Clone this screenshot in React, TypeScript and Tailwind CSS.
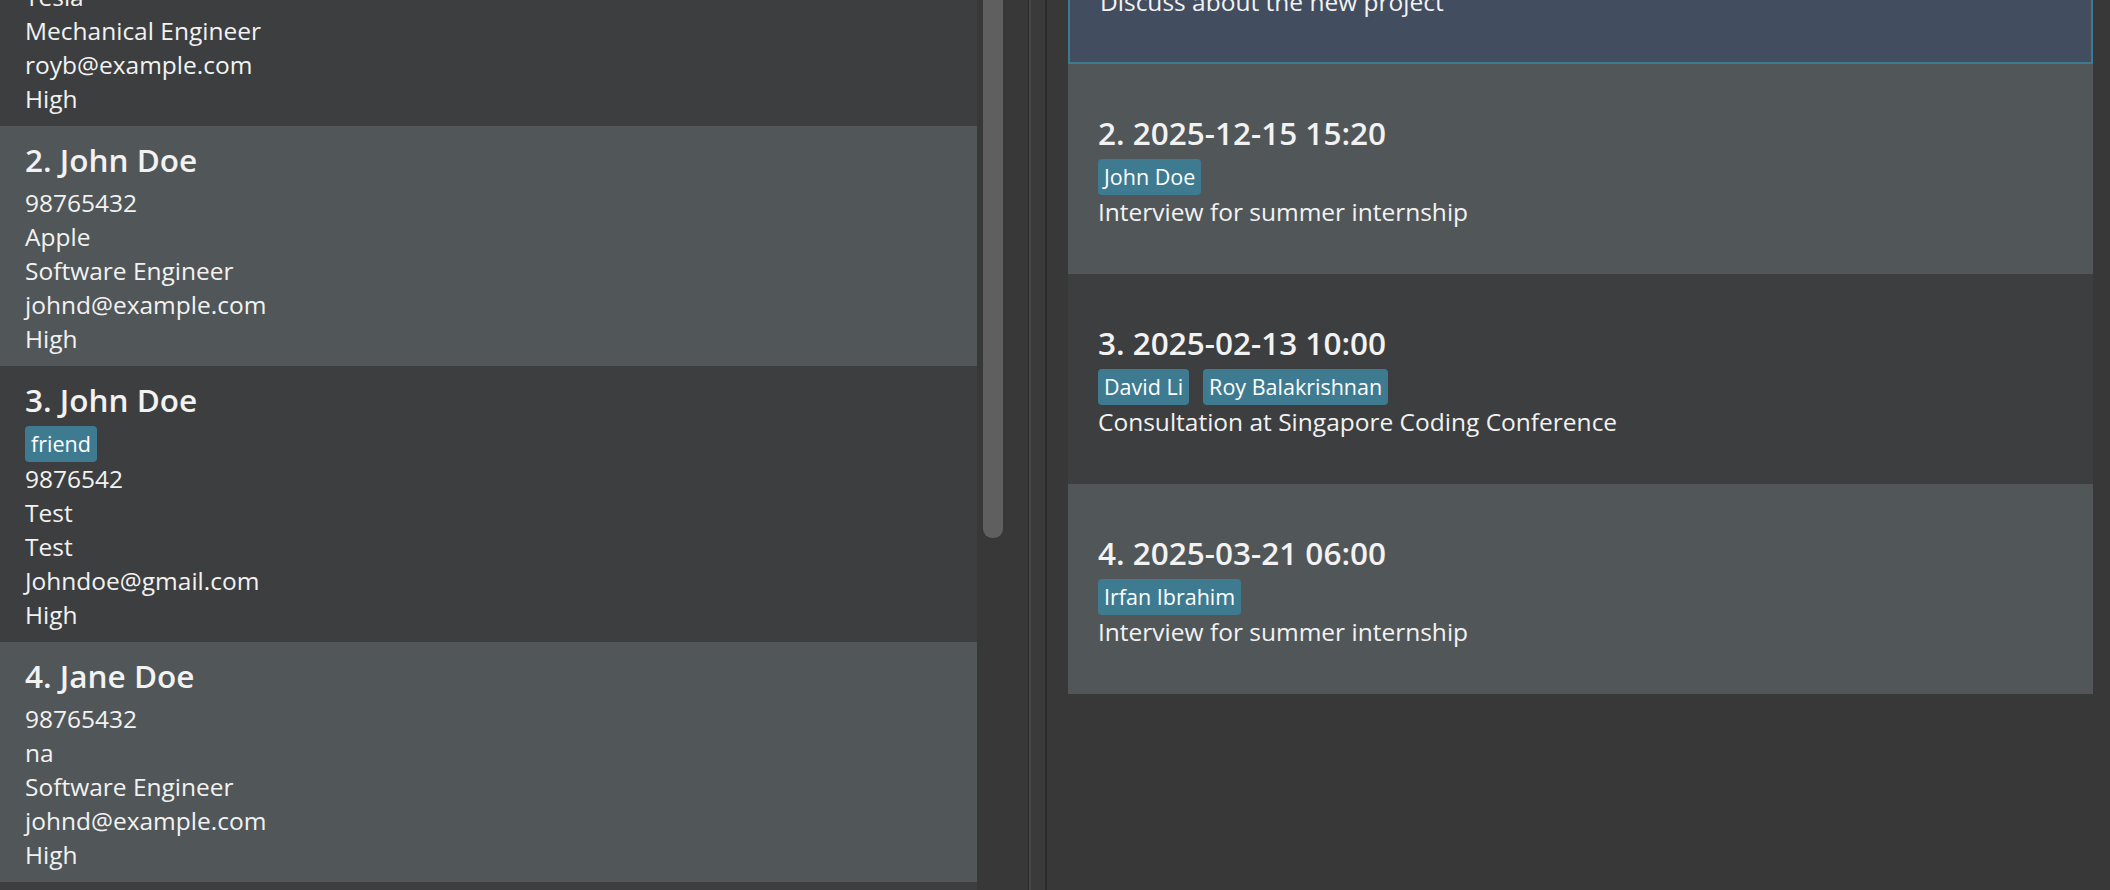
const FONT = "font-['Segoe_UI','Open_Sans',sans-serif]";

type Person = {
  name: string;
  tags: string[];
  lines: string[];
};

type Meeting = {
  title: string;
  people: string[];
  desc: string;
};

const persons: Person[] = [
  {
    name: "1. Roy Balakrishnan",
    tags: [],
    lines: ["92624417", "Tesla", "Mechanical Engineer", "royb@example.com", "High"],
  },
  {
    name: "2. John Doe",
    tags: [],
    lines: ["98765432", "Apple", "Software Engineer", "johnd@example.com", "High"],
  },
  {
    name: "3. John Doe",
    tags: ["friend"],
    lines: ["9876542", "Test", "Test", "Johndoe@gmail.com", "High"],
  },
  {
    name: "4. Jane Doe",
    tags: [],
    lines: ["98765432", "na", "Software Engineer", "johnd@example.com", "High"],
  },
  {
    name: "5. Alex Yeoh",
    tags: [],
    lines: ["87438807", "Google", "Data Scientist", "alexyeoh@example.com", "Medium"],
  },
];

const meetings: Meeting[] = [
  { title: "1. 2025-11-20 09:30", people: ["Alex Yeoh"], desc: "Discuss about the new project" },
  { title: "2. 2025-12-15 15:20", people: ["John Doe"], desc: "Interview for summer internship" },
  {
    title: "3. 2025-02-13 10:00",
    people: ["David Li", "Roy Balakrishnan"],
    desc: "Consultation at Singapore Coding Conference",
  },
  { title: "4. 2025-03-21 06:00", people: ["Irfan Ibrahim"], desc: "Interview for summer internship" },
];

function Tag({ label }: { label: string }) {
  return (
    <span className="h-[36px] rounded-[4px] bg-[#3e7b91] px-[6px] text-[21.5px] leading-[36px] text-white">
      {label}
    </span>
  );
}

function Title({ text }: { text: string }) {
  return <div className="pb-[2px] text-[31.5px] font-semibold leading-[48px] text-[#f2f2f2]">{text}</div>;
}

function Line({ text }: { text: string }) {
  return <div className="text-[24.5px] leading-[34px] text-[#f2f2f2]">{text}</div>;
}

function PersonCard({ person, index }: { person: Person; index: number }) {
  const bg = index % 2 === 0 ? "bg-[#3c3e3f]" : "bg-[#515658]";
  return (
    <div className={`${bg} pb-[10px] pl-[25px] pt-[10px]`}>
      <Title text={person.name} />
      {person.tags.length > 0 && (
        <div className="flex h-[36px] gap-[14px]">
          {person.tags.map((t) => (
            <Tag key={t} label={t} />
          ))}
        </div>
      )}
      {person.lines.map((l, i) => (
        <Line key={i} text={l} />
      ))}
    </div>
  );
}

function MeetingCard({ meeting, index, selected }: { meeting: Meeting; index: number; selected?: boolean }) {
  const bg = selected
    ? "border-2 border-[#3e7b91] bg-[#424d5f]"
    : index % 2 === 0
      ? "bg-[#3c3e3f]"
      : "bg-[#515658]";
  return (
    <div className={`${bg} flex h-[210px] flex-col justify-center pl-[30px]`}>
      <Title text={meeting.title} />
      <div className="flex h-[36px] gap-[14px]">
        {meeting.people.map((p) => (
          <Tag key={p} label={p} />
        ))}
      </div>
      <Line text={meeting.desc} />
    </div>
  );
}

export default function App() {
  return (
    <div className={`${FONT} flex h-[890px] w-[2110px] overflow-hidden bg-[#383838]`}>
      {/* person list + its scrollbar */}
      <div className="flex w-[1028px] shrink-0">
        <div className="w-[977px] shrink-0 overflow-hidden">
          <div className="-mt-[114px]">
            {persons.map((p, i) => (
              <PersonCard key={p.name} person={p} index={i} />
            ))}
          </div>
        </div>
        <div className="w-[32px] shrink-0 px-[6px]">
          <div className="h-[538px] rounded-b-[9px] bg-[#5f5f5f]" />
        </div>
      </div>

      {/* split pane divider */}
      <div className="w-px shrink-0 bg-[#2a2a2a]" />
      <div className="w-[2px] shrink-0 bg-[#474747]" />
      <div className="w-[14px] shrink-0 bg-[#3a3a3a]" />
      <div className="w-[2px] shrink-0 bg-[#2b2b2b]" />

      {/* meeting list */}
      <div className="flex-1 overflow-hidden pl-[21px] pr-[17px]">
        <div className="-mt-[146px]">
          {meetings.map((m, i) => (
            <MeetingCard key={m.title} meeting={m} index={i} selected={i === 0} />
          ))}
        </div>
      </div>
    </div>
  );
}
